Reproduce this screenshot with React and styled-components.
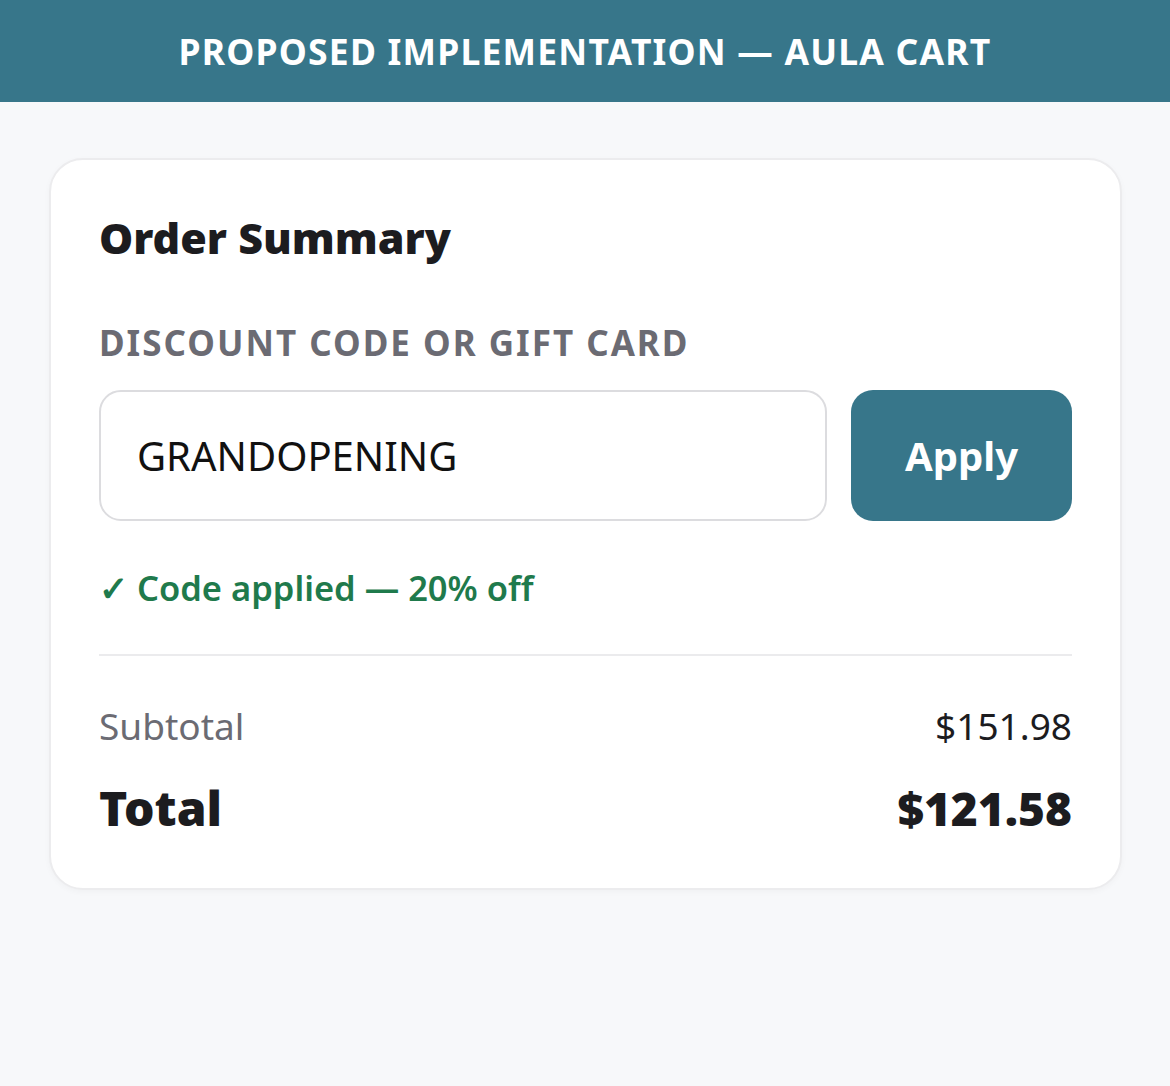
import React from "react";
import styled, { createGlobalStyle } from "styled-components";

const GlobalStyle = createGlobalStyle`
  * {
    box-sizing: border-box;
  }

  body {
    margin: 0;
    background: #f7f8fa;
    font-family: "Noto Sans", "Open Sans", sans-serif;
    color: #1c1c1f;
  }
`;

function App() {
  return (
    <>
      <GlobalStyle />
      <Header>Proposed implementation — Aula Cart</Header>
      <Page>
        <Card>
          <Title>Order Summary</Title>
          <FieldLabel htmlFor="code">Discount code or gift card</FieldLabel>
          <CodeRow>
            <CodeInput id="code" type="text" defaultValue="GRANDOPENING" />
            <ApplyButton type="button">Apply</ApplyButton>
          </CodeRow>
          <Success>✓ Code applied — 20% off</Success>
          <Divider />
          <Line>
            <span className="label">Subtotal</span>
            <span className="value">$151.98</span>
          </Line>
          <Line $total>
            <span className="label">Total</span>
            <span className="value">$121.58</span>
          </Line>
        </Card>
      </Page>
    </>
  );
}

const Header = styled.header`
  height: 102px;
  background: #37768a;
  color: #ffffff;
  display: flex;
  align-items: center;
  justify-content: center;
  font-size: 35.5px;
  font-weight: 700;
  letter-spacing: 1.2px;
  text-transform: uppercase;
`;

const Page = styled.main`
  padding: 56px 48px 56px 49px;
`;

const Card = styled.section`
  background: #ffffff;
  border: 2px solid #ececee;
  border-radius: 34px;
  padding: 50px 48px 48px;
  box-shadow: 0 2px 6px rgba(0, 0, 0, 0.03);
`;

const Title = styled.h2`
  margin: 0 0 54px;
  font-size: 43px;
  font-weight: 900;
  line-height: 1.3;
  color: #1c1c1f;
`;

const FieldLabel = styled.label`
  display: block;
  font-size: 35px;
  font-weight: 700;
  letter-spacing: 2px;
  text-transform: uppercase;
  color: #6b6b73;
  line-height: 1.3;
  margin-bottom: 25px;
`;

const CodeRow = styled.div`
  display: flex;
  gap: 24px;
  height: 131px;
`;

const CodeInput = styled.input`
  flex: 1;
  min-width: 0;
  border: 2px solid #dcdcdf;
  border-radius: 22px;
  padding: 0 36px;
  font-family: inherit;
  font-size: 40px;
  color: #111111;
  outline: none;
  background: #ffffff;
`;

const ApplyButton = styled.button`
  width: 221px;
  border: none;
  border-radius: 22px;
  background: #37768a;
  color: #ffffff;
  font-family: inherit;
  font-size: 40px;
  font-weight: 700;
  cursor: pointer;
`;

const Success = styled.p`
  margin: 45px 0 0;
  font-size: 34.5px;
  font-weight: 600;
  color: #1f7a4c;
  line-height: 1.3;
`;

const Divider = styled.hr`
  border: none;
  border-top: 2px solid #ebebed;
  margin: 43px 0 46px;
`;

const Line = styled.div`
  display: flex;
  justify-content: space-between;
  align-items: baseline;
  margin-top: ${(p) => (p.$total ? "27px" : "0")};
  line-height: 1.3;

  .label {
    font-size: ${(p) => (p.$total ? "48px" : "37px")};
    font-weight: ${(p) => (p.$total ? 900 : 400)};
    color: ${(p) => (p.$total ? "#1c1c1f" : "#6b6b73")};
  }

  .value {
    font-size: ${(p) => (p.$total ? "46px" : "37px")};
    font-weight: ${(p) => (p.$total ? 900 : 400)};
    color: #1c1c1f;
  }
`;

export default App;
